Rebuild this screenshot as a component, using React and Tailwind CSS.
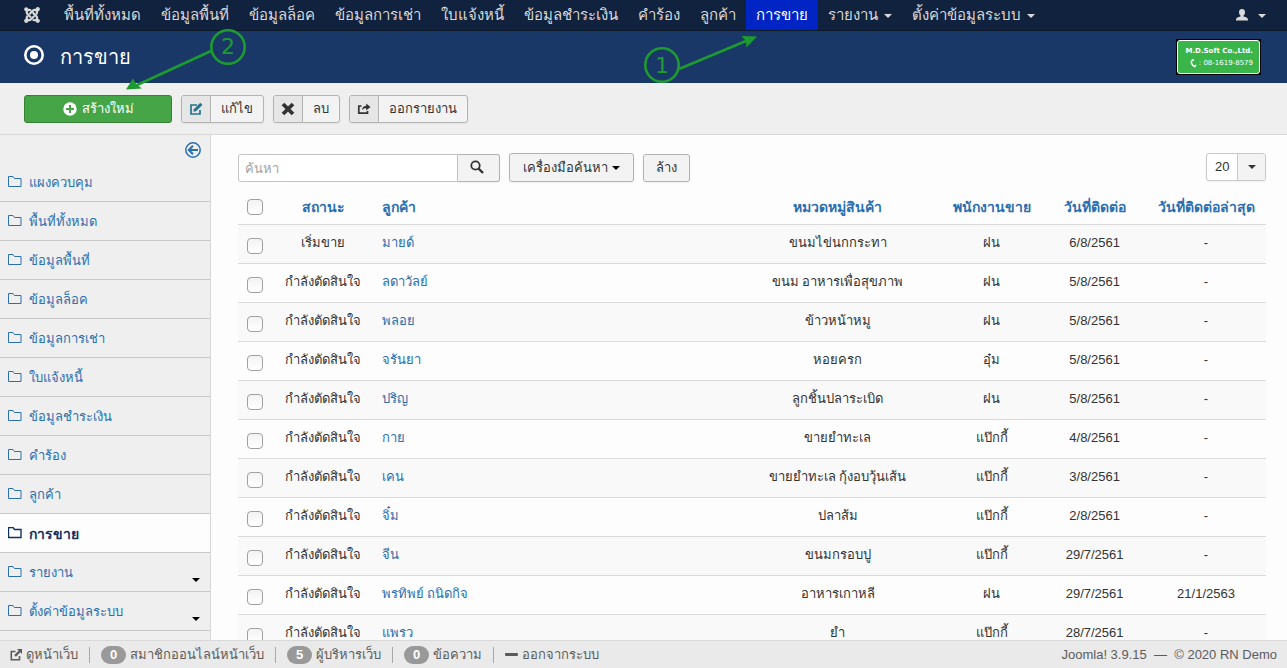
import React, { useState } from 'react';
import { FaJoomla } from 'react-icons/fa';

const navItems = [
    { label: 'พื้นที่ทั้งหมด' },
    { label: 'ข้อมูลพื้นที่' },
    { label: 'ข้อมูลล็อค' },
    { label: 'ข้อมูลการเช่า' },
    { label: 'ใบแจ้งหนี้' },
    { label: 'ข้อมูลชำระเงิน' },
    { label: 'คำร้อง' },
    { label: 'ลูกค้า' },
    { label: 'การขาย', active: true },
    { label: 'รายงาน', dropdown: true },
    { label: 'ตั้งค่าข้อมูลระบบ', dropdown: true },
];

const sideItems = [{ label: 'แผงควบคุม' }, ...navItems];

const rows = [
    { status: 'เริ่มขาย', customer: 'มายด์', category: 'ขนมไข่นกกระทา', sales: 'ฝน', date: '6/8/2561', last: '-' },
    { status: 'กำลังตัดสินใจ', customer: 'ลดาวัลย์', category: 'ขนม อาหารเพื่อสุขภาพ', sales: 'ฝน', date: '5/8/2561', last: '-' },
    { status: 'กำลังตัดสินใจ', customer: 'พลอย', category: 'ข้าวหน้าหมู', sales: 'ฝน', date: '5/8/2561', last: '-' },
    { status: 'กำลังตัดสินใจ', customer: 'จรันยา', category: 'หอยครก', sales: 'อุ๋ม', date: '5/8/2561', last: '-' },
    { status: 'กำลังตัดสินใจ', customer: 'ปริญ', category: 'ลูกชิ้นปลาระเบิด', sales: 'ฝน', date: '5/8/2561', last: '-' },
    { status: 'กำลังตัดสินใจ', customer: 'กาย', category: 'ขายยำทะเล', sales: 'แป๊กกี้', date: '4/8/2561', last: '-' },
    { status: 'กำลังตัดสินใจ', customer: 'เคน', category: 'ขายยำทะเล กุ้งอบวุ้นเส้น', sales: 'แป๊กกี้', date: '3/8/2561', last: '-' },
    { status: 'กำลังตัดสินใจ', customer: 'จิ๋ม', category: 'ปลาส้ม', sales: 'แป๊กกี้', date: '2/8/2561', last: '-' },
    { status: 'กำลังตัดสินใจ', customer: 'จีน', category: 'ขนมกรอบปู', sales: 'แป๊กกี้', date: '29/7/2561', last: '-' },
    { status: 'กำลังตัดสินใจ', customer: 'พรทิพย์ ถนิดกิจ', category: 'อาหารเกาหลี', sales: 'ฝน', date: '29/7/2561', last: '21/1/2563' },
    { status: 'กำลังตัดสินใจ', customer: 'แพรว', category: 'ยำ', sales: 'แป๊กกี้', date: '28/7/2561', last: '-' },
];

const Caret = ({ className = '' }) => (
    <svg viewBox="0 0 8 4" className={`w-2 h-1 shrink-0 fill-current ${className}`} aria-hidden="true">
        <path d="M0 0h8L4 4z" />
    </svg>
);

const FolderIcon = ({ bold }) => (
    <svg viewBox="0 0 14 12" className="w-[14px] h-3 shrink-0" fill="none" stroke="currentColor" strokeWidth={bold ? 1.4 : 1} aria-hidden="true">
        <path d="M.5 10.500V.5h4.500l1.500 2h6.500v8z" />
    </svg>
);

const EditIcon = ({ className }) => (
    <svg viewBox="0 0 14 14" className={className} aria-hidden="true">
        <path d="M8 3H2v9h9V8" fill="none" stroke="currentColor" strokeWidth="1.700" />
        <path d="M4.300 9.800l.6-2.600L10.800 1.300a.8.8 0 0 1 1.100 0l1 1a.8.8 0 0 1 0 1.100L6.900 9.200z" fill="currentColor" />
    </svg>
);

const DeleteIcon = ({ className }) => (
    <svg viewBox="0 0 14 14" className={className} aria-hidden="true">
        <path d="M2 2l10 10M12 2L2 12" stroke="currentColor" strokeWidth="3.800" />
    </svg>
);

const ShareIcon = ({ className }) => (
    <svg viewBox="0 0 14 14" className={className} aria-hidden="true">
        <path d="M4.500 4H1.800v7.200h8.700V9" fill="none" stroke="currentColor" strokeWidth="1.700" />
        <path d="M9.200 1.500L13.500 5 9.200 8.400V6.200c-2 0-3.200.5-4.200 2 .1-2.600 1.600-4.300 4.200-4.500z" fill="currentColor" />
    </svg>
);

const ExternalIcon = () => (
    <svg viewBox="0 0 12 12" className="w-3 h-3 shrink-0" aria-hidden="true">
        <path d="M5.500 2.500H1.300v8.200h8.200V7" fill="none" stroke="currentColor" strokeWidth="1.600" />
        <path d="M7 0h5v5l-1.700-1.700-4.400 4.400-1.600-1.600 4.400-4.400z" fill="currentColor" />
    </svg>
);

const ToolButton = ({ icon: Icon, label, iconClass }) => (
    <button type="button" className="h-7 flex items-stretch rounded-[3px] border border-[#b3b3b3] bg-[#f3f3f3] text-[#333] overflow-hidden shadow-xs">
        <span className="w-[29px] flex items-center justify-center bg-[#e6e6e6] border-r border-[#b3b3b3]">
            <Icon className={iconClass} />
        </span>
        <span className="px-[10px] leading-[26px]">{label}</span>
    </button>
);

const Checkbox = ({ label }) => (
    <input
        type="checkbox"
        aria-label={label}
        className="appearance-none block mx-auto w-4 h-4 rounded-[4px] border border-[#a0a0a0] bg-linear-to-b from-[#f3f3f3] to-white checked:bg-[#2a6fb0]"
    />
);

const Badge = ({ children }) => (
    <span className="w-[25px] h-[18px] mr-1 rounded-full bg-[#999] text-white font-bold leading-[18px] text-center">{children}</span>
);

// Numbered pointers for the two steps of the guide
const Steps = () => (
    <svg className="absolute left-0 top-0 w-[780px] h-[100px] pointer-events-none" viewBox="0 0 780 100" fill="none" stroke="#1e9b30" strokeWidth="2.600" aria-hidden="true">
        <circle cx="228" cy="47" r="16.700" />
        <path d="M211 51L136 85.500" />
        <path d="M126 89.500L133 78.500 136.500 84.500 142 88.500z" fill="#1e9b30" stroke="none" />
        <circle cx="662" cy="65" r="16.700" />
        <path d="M679 69l67-28" />
        <path d="M757 36.500L741.500 36 746 41 746.500 47.500z" fill="#1e9b30" stroke="none" />
        <g fill="#1e9b30" stroke="none" textAnchor="middle" className="font-['DejaVu_Sans',sans-serif] text-[22px]">
            <text x="228" y="54">2</text>
            <text x="662" y="73">1</text>
        </g>
    </svg>
);

const TopNav = () => (
    <nav className="h-[31px] shrink-0 flex items-stretch bg-[#10223e] border-b border-[#0b1829] text-[15px] leading-[30px] text-[#d9d9d9]">
        <a href="#" aria-label="Joomla" className="w-[54px] pl-[23px] flex items-center">
            <FaJoomla className="w-[18px] h-[18px]" />
        </a>
        {navItems.map((item) => (
            <a
                key={item.label}
                href="#"
                className={`px-[10px] flex items-center whitespace-nowrap ${item.active ? 'bg-[#0025c4] text-white' : ''}`}
            >
                {item.label}
                {item.dropdown && <Caret className="ml-[6px] mt-0.5" />}
            </a>
        ))}
        <a href="#" aria-label="User" className="ml-auto pr-[21px] flex items-center">
            <svg viewBox="0 0 12 12" className="w-3 h-3 fill-current" aria-hidden="true">
                <path d="M6 0c1.800 0 3 1.200 3 3.200 0 1.500-.6 2.800-1.500 3.400v1c2.500.5 4.500 1.400 4.500 3V11.500H0V10.600c0-1.600 2-2.500 4.500-3v-1C3.600 6 3 4.700 3 3.200 3 1.200 4.200 0 6 0z" />
            </svg>
            <Caret className="ml-[10px] mt-0.5" />
        </a>
    </nav>
);

const Header = () => (
    <header className="h-[52px] shrink-0 pl-6 pr-[26px] flex items-center bg-[#1a3867] text-white">
        <svg viewBox="0 0 20 20" className="w-5 h-5 mb-1" aria-hidden="true">
            <circle cx="10" cy="10" r="8.700" fill="none" stroke="currentColor" strokeWidth="2.600" />
            <circle cx="10" cy="10" r="4" fill="currentColor" />
        </svg>
        <h1 className="ml-4 text-[20px] leading-9">การขาย</h1>
        <a href="#" className="ml-auto w-[85px] h-9 p-px bg-black text-white font-['DejaVu_Sans',sans-serif] font-bold text-[7px]">
            <span className="h-full pr-[6px] flex flex-col items-end justify-center gap-[3px] rounded-[3px] border border-white bg-[#3ab54a] leading-[9px] whitespace-nowrap">
                <span>M.D.Soft Co.,Ltd.</span>
                <span className="flex items-center font-normal">
                    <svg viewBox="0 0 7 9" className="w-[7px] h-[9px] mr-[2px]" fill="none" stroke="currentColor" strokeWidth="1.500" aria-hidden="true">
                        <path d="M3 .8C.2 2 1 6.500 5.500 8M2 1.500L4 1M4.500 7.800L6 6" />
                    </svg>
                    : 08-1619-8579
                </span>
            </span>
        </a>
    </header>
);

const Toolbar = () => (
    <div className="h-[52px] shrink-0 px-6 flex items-center gap-[9px] bg-[#efefef] border-b border-[#d8d8d8]">
        <button type="button" className="w-[148px] h-7 flex items-center justify-center gap-[5px] rounded-[3px] border border-[#378137] bg-[#46a546] text-white">
            <svg viewBox="0 0 14 14" className="w-[14px] h-[14px]" aria-hidden="true">
                <circle cx="7" cy="7" r="6.700" fill="currentColor" />
                <path d="M7 3v8M3 7h8" stroke="#46a546" strokeWidth="2" />
            </svg>
            สร้างใหม่
        </button>
        <ToolButton icon={EditIcon} label="แก้ไข" iconClass="w-[14px] h-[14px] text-[#24748c]" />
        <ToolButton icon={DeleteIcon} label="ลบ" iconClass="w-[14px] h-[14px]" />
        <ToolButton icon={ShareIcon} label="ออกรายงาน" iconClass="w-[14px] h-[14px]" />
    </div>
);

const Sidebar = () => (
    <aside className="w-[211px] shrink-0 bg-[#efefef] border-r border-[#d8d8d8] text-[#2a6fb0]">
        <div className="h-7 pr-[9px] flex items-end justify-end">
            <button type="button" aria-label="Toggle sidebar" className="mb-[5px]">
                <svg viewBox="0 0 16 16" className="w-4 h-4" fill="none" stroke="currentColor" aria-hidden="true">
                    <circle cx="8" cy="8" r="7.200" strokeWidth="1.500" />
                    <path d="M13 8H4M8 3.800L3.800 8 8 12.200" strokeWidth="2" />
                </svg>
            </button>
        </div>
        <ul>
            {sideItems.map((item) => (
                <li key={item.label} className={`border-b border-[#c9c9c9] ${item.active ? 'bg-[#fdfdfd] text-[#14305c] text-sm font-bold' : ''}`}>
                    <a href="#" className="h-[38px] pl-2 pr-[10px] flex items-center gap-[7px] leading-[18px]">
                        <FolderIcon bold={item.active} />
                        <span className="pt-0.5">{item.label}</span>
                        {item.dropdown && <Caret className="ml-auto mt-4 text-black" />}
                    </a>
                </li>
            ))}
        </ul>
    </aside>
);

const SearchBar = () => {
    const [search, setSearch] = useState('');

    return (
        <div className="flex items-end gap-[9px] text-[#333]">
            <form className="flex" onSubmit={(e) => e.preventDefault()}>
                <input
                    type="text"
                    aria-label="ค้นหา"
                    placeholder="ค้นหา"
                    value={search}
                    onChange={(e) => setSearch(e.target.value)}
                    className="w-[220px] h-7 px-[6px] rounded-l-[3px] border border-[#c4c4c4] bg-white placeholder:text-[#a3a3a3] outline-none"
                />
                <button type="submit" aria-label="ค้นหา" className="w-[42px] h-7 flex items-center justify-center rounded-r-[3px] border border-l-0 border-[#b3b3b3] bg-[#f3f3f3] shadow-xs">
                    <svg viewBox="0 0 14 14" className="w-[14px] h-[14px] mr-1 mb-0.5" fill="none" stroke="currentColor" aria-hidden="true">
                        <circle cx="5.500" cy="5.500" r="4.200" strokeWidth="1.800" />
                        <path d="M8.500 8.500l4.500 4.500" strokeWidth="2.400" />
                    </svg>
                </button>
            </form>
            <button type="button" className="h-[29px] px-[13px] flex items-center gap-1 rounded-[3px] border border-[#b3b3b3] bg-[#f3f3f3] shadow-xs">
                เครื่องมือค้นหา
                <Caret className="text-black" />
            </button>
            <button type="button" className="h-7 px-3 rounded-[3px] border border-[#b3b3b3] bg-[#f3f3f3] shadow-xs" onClick={() => setSearch('')}>
                ล้าง
            </button>
            <div className="relative ml-auto self-start">
                <select aria-label="Limit" className="appearance-none block w-[60px] h-7 pl-2 rounded-[3px] border border-[#c8c8c8] bg-white shadow-xs">
                    <option>20</option>
                    <option>50</option>
                </select>
                <span className="absolute top-px right-px bottom-px w-7 flex items-center justify-center rounded-r-[2px] border-l border-[#c8c8c8] bg-[#f3f3f3] pointer-events-none">
                    <Caret />
                </span>
            </div>
        </div>
    );
};

const DataTable = () => (
    <table className="w-full mt-2 table-fixed border-collapse text-center leading-[18px] text-[#333]">
        <thead>
            <tr className="h-[34px] text-sm text-[#2a6fb0] whitespace-nowrap">
                <th className="w-[34px]"><Checkbox label="เลือกทั้งหมด" /></th>
                <th className="w-[10%]"><a href="#">สถานะ</a></th>
                <th className="px-[7px] text-left"><a href="#">ลูกค้า</a></th>
                <th className="w-[20%]"><a href="#">หมวดหมู่สินค้า</a></th>
                <th className="w-[10%]"><a href="#">พนักงานขาย</a></th>
                <th className="w-[10%]"><a href="#">วันที่ติดต่อ</a></th>
                <th className="w-[120px]"><a href="#">วันที่ติดต่อล่าสุด</a></th>
            </tr>
        </thead>
        <tbody>
            {rows.map((row) => (
                <tr key={row.customer} className="h-[39px] align-top border-t border-[#dcdcdc] odd:bg-[#f9f9f9] whitespace-nowrap">
                    <td className="pt-[13px]"><Checkbox label={row.customer} /></td>
                    <td className="pt-[9px]">{row.status}</td>
                    <td className="pt-[9px] px-[7px] text-left"><a href="#" className="text-[#2a6fb0]">{row.customer}</a></td>
                    <td className="pt-[9px]">{row.category}</td>
                    <td className="pt-[9px]">{row.sales}</td>
                    <td className="pt-[9px]">{row.date}</td>
                    <td className="pt-[9px]">{row.last}</td>
                </tr>
            ))}
        </tbody>
    </table>
);

const Footer = () => (
    <footer className="h-7 shrink-0 px-[10px] flex items-center bg-[#eaeaea] border-t border-[#d8d8d8] text-[#5c5c5c] whitespace-nowrap">
        <div className="flex items-center divide-x divide-[#a8a8a8] leading-4">
            <a href="#" className="h-4 pr-[11px] flex items-center gap-1"><ExternalIcon />ดูหน้าเว็บ</a>
            <span className="h-4 px-[11px] flex items-center"><Badge>0</Badge>สมาชิกออนไลน์หน้าเว็บ</span>
            <span className="h-4 px-[11px] flex items-center"><Badge>5</Badge>ผู้บริหารเว็บ</span>
            <a href="#" className="h-4 px-[11px] flex items-center"><Badge>0</Badge>ข้อความ</a>
            <a href="#" className="h-4 px-[11px] flex items-center">
                <svg viewBox="0 0 13 3" className="w-[13px] h-[3px] mr-1 fill-current" aria-hidden="true"><rect width="13" height="3" rx="1" /></svg>
                ออกจากระบบ
            </a>
        </div>
        <p className="ml-auto">Joomla! 3.9.15 &nbsp;—&nbsp; © 2020 RN Demo</p>
    </footer>
);

const App = () => {
    return (
        <div className="relative h-screen flex flex-col overflow-hidden bg-[#fdfdfd] text-[13px] font-['Liberation_Sans',sans-serif]">
            <TopNav />
            <Header />
            <Toolbar />
            <div className="flex-1 min-h-0 overflow-y-auto [scrollbar-width:none]">
                <div className="flex">
                    <Sidebar />
                    <main className="flex-1 min-w-0 pt-[18px] pl-[27px] pr-[21px]">
                        <SearchBar />
                        <DataTable />
                    </main>
                </div>
            </div>
            <Footer />
            <Steps />
        </div>
    );
};

export default App;
